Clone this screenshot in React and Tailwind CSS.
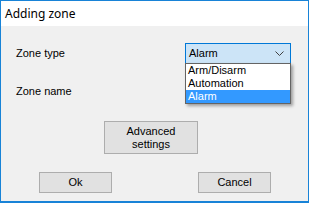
import { useState } from 'react';

const OPTIONS = ['Arm/Disarm', 'Automation', 'Alarm'];

function WinButton({ className = '', children }) {
  return (
    <button
      type="button"
      className={`border border-[#adadad] bg-[#e1e1e1] text-[11px] leading-[13px] text-black ${className}`}
    >
      {children}
    </button>
  );
}

export default function App() {
  const [value] = useState('Alarm');

  return (
    <div className="flex h-[203px] w-[309px] flex-col border border-b-2 border-[#1883d7] font-['Liberation_Sans',Arial,sans-serif] text-[11px] text-black">
      <div className="flex h-[25px] items-center bg-white pl-[4px] font-['Noto_Sans','Open_Sans',sans-serif] text-[12px]">
        Adding zone
      </div>

      <div className="relative flex flex-1 flex-col bg-[#f0f0f0] pl-[15px]">
        {/* zone type */}
        <div className="mt-[17px] flex items-center">
          <span className="w-[169px]">Zone type</span>
          <div className="flex h-[21px] w-[106px] items-center justify-between border border-[#0078d7] bg-[#cce4f7] pl-[3px] pr-[6px]">
            <span>{value}</span>
            <svg width="9" height="5" viewBox="0 0 9 5" fill="none" stroke="#404040" strokeWidth="1">
              <path d="M0.5 0.5 L4.5 4.5 L8.5 0.5" />
            </svg>
          </div>
        </div>

        {/* zone name (its text box is hidden under the open list) */}
        <div className="mt-[17px] flex h-[21px] items-center">
          <span>Zone name</span>
        </div>

        <div className="mt-[19px] flex pl-[88px]">
          <WinButton className="h-[33px] w-[94px]">
            Advanced
            <br />
            settings
          </WinButton>
        </div>

        <div className="mt-[18px] flex gap-[86px] pl-[23px]">
          <WinButton className="h-[21px] w-[73px]">Ok</WinButton>
          <WinButton className="h-[21px] w-[73px]">Cancel</WinButton>
        </div>

        {/* open dropdown list */}
        <ul className="absolute left-[184px] top-[37px] w-[106px] border border-[#646464] bg-white shadow-[2px_2px_3px_rgba(0,0,0,0.35)]">
          {OPTIONS.map((opt) => (
            <li
              key={opt}
              className={`h-[13px] pl-[2px] leading-[13px] ${opt === value ? 'bg-[#3399ff] text-white' : ''}`}
            >
              {opt}
            </li>
          ))}
        </ul>
      </div>
    </div>
  );
}
